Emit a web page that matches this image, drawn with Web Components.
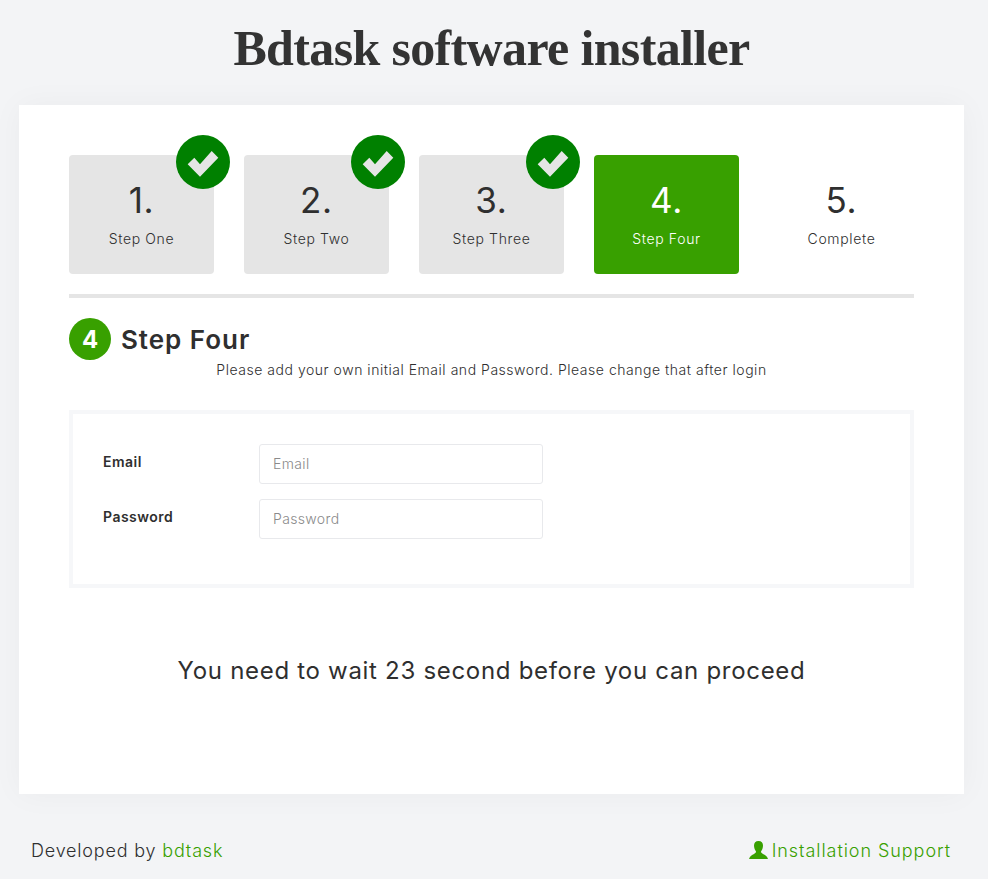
<!DOCTYPE html>
<html lang="en">
<head>
<meta charset="utf-8">
<title>Bdtask software installer</title>
<style>
  html, body { margin: 0; background: #f3f4f6; }
  body {
    padding: 0 24px 0 19px;
    height: 879px;
    box-sizing: border-box;
    overflow: hidden;
    font-family: Inter, "Liberation Sans", sans-serif;
    color: #2f2f2f;
  }
</style>
</head>
<body>
<installer-header>Bdtask software installer</installer-header>
<installer-card>
  <step-bar>
    <step-item num="1" state="done">Step One</step-item>
    <step-item num="2" state="done">Step Two</step-item>
    <step-item num="3" state="done">Step Three</step-item>
    <step-item num="4" state="active">Step Four</step-item>
    <step-item num="5">Complete</step-item>
  </step-bar>
  <step-title num="4" note="Please add your own initial Email and Password. Please change that after login">Step Four</step-title>
  <form-box>
    <form-field label="Email" placeholder="Email" type="email"></form-field>
    <form-field label="Password" placeholder="Password" type="password"></form-field>
  </form-box>
  <wait-message>You need to wait 23 second before you can proceed</wait-message>
</installer-card>
<installer-footer></installer-footer>

<script>
const define = (name, html) => {
  customElements.define(name, class extends HTMLElement {
    connectedCallback() {
      this.dom = this.attachShadow({ mode: "open" });
      this.dom.innerHTML = html(this);
    }
  });
};

define("installer-header", () => `
<style>
  :host { display: block; height: 105px; box-sizing: border-box; padding-top: 19px; text-align: center; }
  h1 { margin: 0; font: 700 50px/58px "Liberation Serif", serif; color: #333; letter-spacing: -.65px; }
</style>
<h1><slot></slot></h1>
`);

define("installer-card", () => `
<style>
  :host {
    display: block;
    height: 689px;
    box-sizing: border-box;
    padding: 50px;
    background: #fff;
    box-shadow: 0 0 30px rgba(0, 0, 0, .04);
  }
</style>
<slot></slot>
`);

define("step-bar", () => `
<style>
  :host {
    display: flex;
    gap: 30px;
    padding-bottom: 20px;
    border-bottom: 4px solid #e5e5e5;
  }
</style>
<slot></slot>
`);

define("step-item", (el) => {
  const state = el.getAttribute("state") || "";
  const check = state === "done" ? `
    <svg class="check" viewBox="0 0 54 54" aria-hidden="true">
      <circle cx="27" cy="27" r="27" fill="#008000"/>
      <path d="M11.7 29.3 18.3 22.7 24 29.3 35.7 16 42.3 22.7 24 41.7Z" fill="#e5e5e5"/>
    </svg>` : "";
  return `
<style>
  :host {
    position: relative;
    display: block;
    width: 145px;
    height: 119px;
    box-sizing: border-box;
    padding-top: 24px;
    border-radius: 4px;
    text-align: center;
  }
  :host([state="done"]) { background: #e5e5e5; }
  :host([state="active"]) { background: #38a000; color: #fff; }
  .num { font-size: 35px; line-height: 42px; font-weight: 400; letter-spacing: .02em; }
  .label { margin-top: 8px; font-size: 14px; line-height: 20px; font-weight: 300; letter-spacing: .046em; }
  .check { position: absolute; top: -20px; right: -16px; width: 54px; height: 54px; }
</style>
<div class="num">${el.getAttribute("num")}.</div>
<div class="label"><slot></slot></div>
${check}
`;
});

define("step-title", (el) => `
<style>
  :host { display: block; padding-top: 20px; }
  .head { display: flex; align-items: center; gap: 10px; }
  .badge {
    width: 42px; height: 42px; border-radius: 50%;
    display: flex; align-items: center; justify-content: center;
    background: #38a000; color: #fff;
    font-size: 24px; font-weight: 700;
  }
  h2 { margin: 2px 0 0; font-size: 26px; line-height: 40px; font-weight: 600; letter-spacing: .037em; }
  p { margin: 0; font-size: 14px; line-height: 20px; font-weight: 300; text-align: center; letter-spacing: .038em; }
</style>
<div class="head"><span class="badge">${el.getAttribute("num")}</span><h2><slot></slot></h2></div>
<p>${el.getAttribute("note")}</p>
`);

define("form-box", () => `
<style>
  :host {
    display: flex;
    flex-direction: column;
    gap: 15px;
    margin-top: 30px;
    height: 178px;
    box-sizing: border-box;
    padding: 30px;
    border: 4px solid #f6f7f9;
  }
</style>
<slot></slot>
`);

define("form-field", (el) => `
<style>
  :host { display: grid; grid-template-columns: 156px 284px; }
  label { font-size: 14px; line-height: 20px; font-weight: 600; padding-top: 8px; letter-spacing: .035em; }
  input {
    box-sizing: border-box;
    width: 284px;
    height: 40px;
    padding: 0 13px 2px;
    border: 1px solid #e8e9ec;
    border-radius: 3px;
    background: #fff;
    font: 300 14px Inter, sans-serif;
    letter-spacing: .025em;
  }
  input::placeholder { color: #8a8a8a; opacity: 1; }
</style>
<label>${el.getAttribute("label")}</label>
<input type="${el.getAttribute("type")}" placeholder="${el.getAttribute("placeholder")}">
`);

define("wait-message", () => `
<style>
  :host {
    display: block;
    margin-top: 67px;
    font-size: 24px;
    line-height: 32px;
    font-weight: 400;
    text-align: center;
    letter-spacing: .029em;
  }
</style>
<slot></slot>
`);

define("installer-footer", () => `
<style>
  :host {
    display: flex;
    justify-content: space-between;
    align-items: center;
    padding: 46px 13px 0 12px;
    font-size: 18px;
    line-height: 22px;
    font-weight: 300;
    letter-spacing: .045em;
  }
  a { color: #38a000; text-decoration: none; }
  .support { display: flex; align-items: center; gap: 4px; letter-spacing: .052em; }
  svg { width: 19px; height: 18px; margin-top: -2px; fill: #38a000; }
</style>
<span>Developed by <a href="#">bdtask</a></span>
<a class="support" href="#">
  <svg viewBox="0 0 19 18" aria-hidden="true"><path d="M9.5 0C12.5 0 14 2 14 4.5 14 7 13 9 12 10.5 12 11.5 12.5 12 14 13 16 14 18 15 19 18H0C1 15 3 14 5 13 6.5 12 7 11.5 7 10.5 6 9 5 7 5 4.5 5 2 6.5 0 9.5 0Z"/></svg>
  Installation Support
</a>
`);
</script>
</body>
</html>
